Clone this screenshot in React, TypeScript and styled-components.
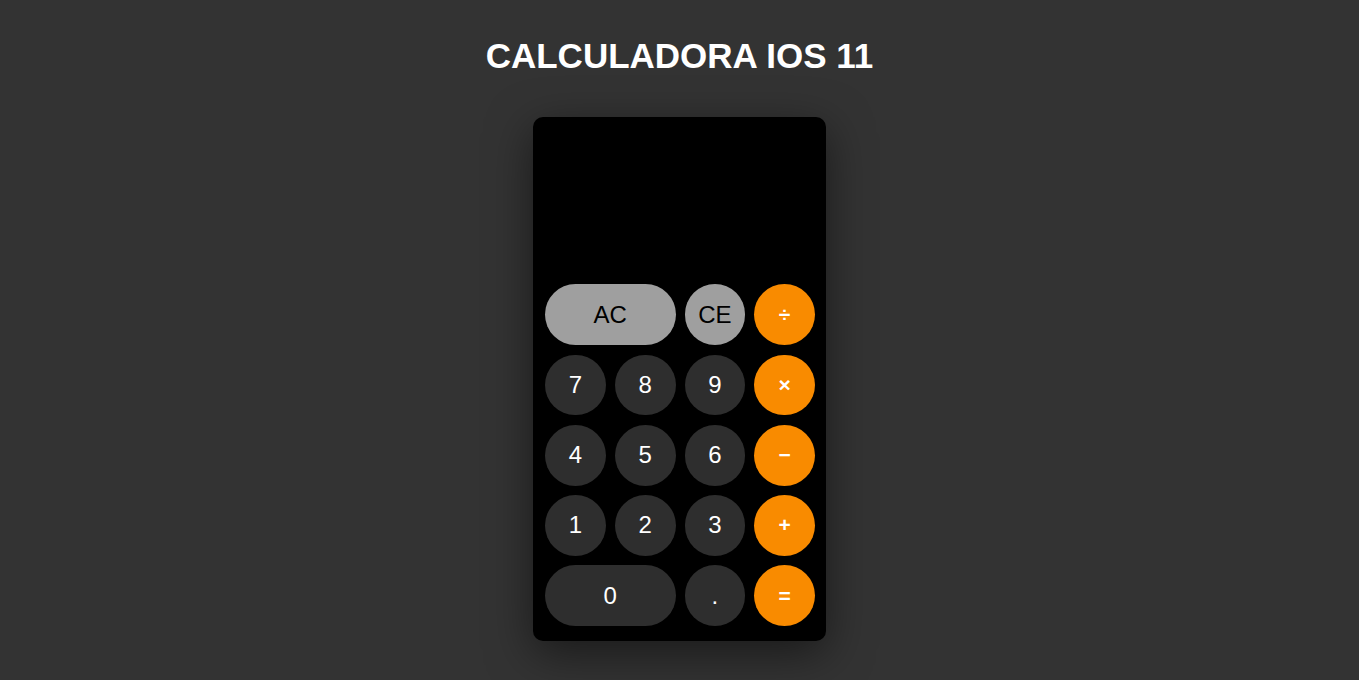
import React from "react";
import styled, { createGlobalStyle } from "styled-components";

const Global = createGlobalStyle`
  html, body { margin: 0; padding: 0; background: #333333; }
  body { font-family: "Liberation Sans", Arial, sans-serif; }
`;

const Page = styled.div`
  display: flex;
  flex-direction: column;
  align-items: center;
  min-height: 680px;
`;

const Title = styled.h1`
  margin: 36px 0 0;
  height: 40px;
  line-height: 40px;
  font-size: 35px;
  font-weight: 700;
  color: #ffffff;
`;

const Calc = styled.div`
  margin-top: 41px;
  width: 293px;
  height: 524px;
  box-sizing: border-box;
  background: #000000;
  border-radius: 10px;
  box-shadow: 0 12px 45px rgba(0, 0, 0, 0.5);
  display: flex;
  flex-direction: column;
  padding: 0 11px 15px 12px;
`;

const Display = styled.div`
  flex: 1;
  color: #fff;
  font-size: 60px;
  display: flex;
  align-items: flex-end;
  justify-content: flex-end;
`;

const Keys = styled.div`
  display: grid;
  grid-template-columns: repeat(4, 1fr);
  grid-auto-rows: 60.75px;
  column-gap: 9px;
  row-gap: 9.5px;
`;

type Kind = "fn" | "num" | "op";

const Key = styled.button<{ $kind: Kind; $wide?: boolean }>`
  border: none;
  margin: 0;
  padding: 0;
  border-radius: 31px;
  grid-column: ${(p) => (p.$wide ? "span 2" : "span 1")};
  font-family: "Liberation Sans", Arial, sans-serif;
  font-size: ${(p) => (p.$kind === "op" ? "21px" : "24px")};
  font-weight: ${(p) => (p.$kind === "op" ? 700 : 400)};
  background: ${(p) =>
    p.$kind === "fn" ? "#9f9f9f" : p.$kind === "op" ? "#f98b00" : "#2e2e2e"};
  color: ${(p) => (p.$kind === "fn" ? "#000000" : "#ffffff")};
  display: flex;
  align-items: center;
  justify-content: center;
  cursor: pointer;
`;

const keys: { label: string; kind: Kind; wide?: boolean }[] = [
  { label: "AC", kind: "fn", wide: true },
  { label: "CE", kind: "fn" },
  { label: "÷", kind: "op" },
  { label: "7", kind: "num" },
  { label: "8", kind: "num" },
  { label: "9", kind: "num" },
  { label: "×", kind: "op" },
  { label: "4", kind: "num" },
  { label: "5", kind: "num" },
  { label: "6", kind: "num" },
  { label: "−", kind: "op" },
  { label: "1", kind: "num" },
  { label: "2", kind: "num" },
  { label: "3", kind: "num" },
  { label: "+", kind: "op" },
  { label: "0", kind: "num", wide: true },
  { label: ".", kind: "num" },
  { label: "=", kind: "op" },
];

export default function App() {
  return (
    <>
      <Global />
      <Page>
        <Title>CALCULADORA IOS 11</Title>
        <Calc>
          <Display />
          <Keys>
            {keys.map((k) => (
              <Key key={k.label} $kind={k.kind} $wide={k.wide}>
                {k.label}
              </Key>
            ))}
          </Keys>
        </Calc>
      </Page>
    </>
  );
}
